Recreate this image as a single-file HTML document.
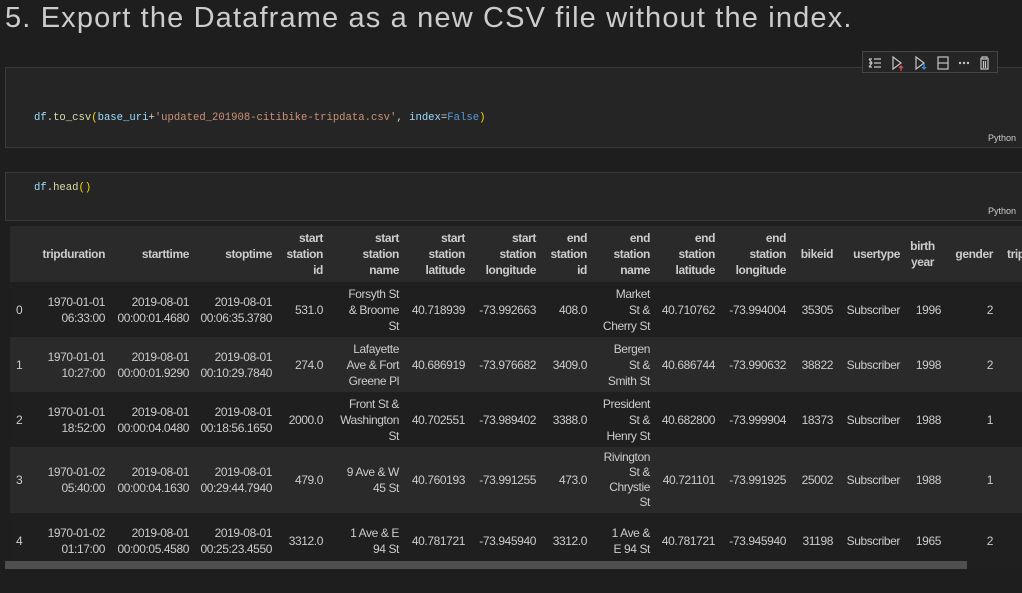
<!DOCTYPE html>
<html><head><meta charset="utf-8"><style>
*{margin:0;padding:0;box-sizing:border-box}
body{width:1022px;height:593px;background:#1e1e1e;color:#cccccc;font-family:"Liberation Sans",sans-serif;position:relative;overflow:hidden}
.title{position:absolute;left:5px;top:2px;font-size:29px;color:#cccccc;white-space:nowrap;letter-spacing:1.15px}
.cell{position:absolute;left:5px;width:1020px;background:#252526;border:1px solid #3a3a3a}
.code{position:absolute;left:28px;font-family:"Liberation Mono",monospace;font-size:10.6px;color:#d4d4d4;white-space:nowrap}
.py{position:absolute;right:8px;font-size:9px;color:#cccccc}
.v{color:#9cdcfe}.s{color:#ce9178}.b{color:#ffd700}.k{color:#569cd6}.f{color:#dcdcaa}
.tb{position:absolute;left:862px;top:51px;width:136px;height:22px;border:1px solid #454545;background:#252526;z-index:5}
table{position:absolute;left:10px;top:226px;width:1040px;border-collapse:collapse;table-layout:fixed;font-size:12px;letter-spacing:-0.4px}
td,th{text-align:right;padding:0 4px 0 0;white-space:nowrap;line-height:16px;overflow:hidden}
th{font-weight:bold;height:56px;background:#2a2a2a;color:#cccccc}
tr.o td{background:#1f1f1f}tr.e td{background:#2a2a2a}
td{height:55px;color:#cccccc}
td:first-child{text-align:left;padding-left:6px}
.sb{position:absolute;left:5px;top:561px;width:962px;height:8px;background:#4f4f4f}
</style></head><body>
<div class="title">5. Export the Dataframe as a new CSV file without the index.</div>
<div class="cell" style="top:67px;height:81px">
<div class="code" style="top:44px"><span class="v">df</span>.<span class="f">to_csv</span><span class="b">(</span><span class="v">base_uri</span>+<span class="s">'updated_201908-citibike-tripdata.csv'</span>, <span class="v">index</span>=<span class="k">False</span><span class="b">)</span></div>
<div class="py" style="top:65px">Python</div>
</div>
<div class="tb">
<svg width="136" height="22" viewBox="0 0 136 22" fill="none" stroke="#c5c5c5" stroke-width="1.2">
<path d="M6 7h3M6 11h3M6 15h3M11 7h7M11 11h7M11 15h7M6 7l3 4-3 4"/>
<path d="M30 5l8 6-8 6z"/><path d="M38 14v5M36 16l2-2 2 2" stroke="#f14c4c"/>
<path d="M53 5l8 6-8 6z"/><path d="M61 12v5M59 15l2 2 2-2" stroke="#3794ff"/>
<rect x="75" y="5" width="10" height="12"/><path d="M75 11h10"/>
<circle cx="97" cy="11" r=".6" fill="#c5c5c5"/><circle cx="101" cy="11" r=".6" fill="#c5c5c5"/><circle cx="105" cy="11" r=".6" fill="#c5c5c5"/>
<path d="M117 7h9M119 7V5h5v2M118 8v9h7V8M120.5 9v7M122.5 9v7"/>
</svg></div>
<div class="cell" style="top:172px;height:49px">
<div class="code" style="top:9px"><span class="v">df</span>.<span class="f">head</span><span class="b">()</span></div>
<div class="py" style="top:33px">Python</div>
</div>
<table>
<colgroup><col style="width:20px"><col style="width:79px"><col style="width:84px"><col style="width:83px"><col style="width:51px"><col style="width:76px"><col style="width:66px"><col style="width:71px"><col style="width:51px"><col style="width:63px"><col style="width:65px"><col style="width:71px"><col style="width:47px"><col style="width:67px"><col style="width:41px"><col style="width:52px"><col style="width:53px"></colgroup>
<tr><th></th><th>tripduration</th><th>starttime</th><th>stoptime</th><th>start<br>station<br>id</th><th>start<br>station<br>name</th><th>start<br>station<br>latitude</th><th>start<br>station<br>longitude</th><th>end<br>station<br>id</th><th>end<br>station<br>name</th><th>end<br>station<br>latitude</th><th>end<br>station<br>longitude</th><th>bikeid</th><th>usertype</th><th style="text-align:center">birth<br>year</th><th>gender</th><th style="text-align:left;padding-left:10px">trip</th></tr>
<tr class="o"><td>0</td><td>1970-01-01<br>06:33:00</td><td>2019-08-01<br>00:00:01.4680</td><td>2019-08-01<br>00:06:35.3780</td><td>531.0</td><td>Forsyth St<br>&amp; Broome<br>St</td><td>40.718939</td><td>-73.992663</td><td>408.0</td><td>Market<br>St &amp;<br>Cherry St</td><td>40.710762</td><td>-73.994004</td><td>35305</td><td>Subscriber</td><td>1996</td><td>2</td><td></td></tr>
<tr class="e"><td>1</td><td>1970-01-01<br>10:27:00</td><td>2019-08-01<br>00:00:01.9290</td><td>2019-08-01<br>00:10:29.7840</td><td>274.0</td><td>Lafayette<br>Ave &amp; Fort<br>Greene Pl</td><td>40.686919</td><td>-73.976682</td><td>3409.0</td><td>Bergen<br>St &amp;<br>Smith St</td><td>40.686744</td><td>-73.990632</td><td>38822</td><td>Subscriber</td><td>1998</td><td>2</td><td></td></tr>
<tr class="o"><td>2</td><td>1970-01-01<br>18:52:00</td><td>2019-08-01<br>00:00:04.0480</td><td>2019-08-01<br>00:18:56.1650</td><td>2000.0</td><td>Front St &amp;<br>Washington<br>St</td><td>40.702551</td><td>-73.989402</td><td>3388.0</td><td>President<br>St &amp;<br>Henry St</td><td>40.682800</td><td>-73.999904</td><td>18373</td><td>Subscriber</td><td>1988</td><td>1</td><td></td></tr>
<tr class="e"><td style="height:66px">3</td><td>1970-01-02<br>05:40:00</td><td>2019-08-01<br>00:00:04.1630</td><td>2019-08-01<br>00:29:44.7940</td><td>479.0</td><td>9 Ave &amp; W<br>45 St</td><td>40.760193</td><td>-73.991255</td><td>473.0</td><td style="line-height:15px">Rivington<br>St &amp;<br>Chrystie<br>St</td><td>40.721101</td><td>-73.991925</td><td>25002</td><td>Subscriber</td><td>1988</td><td>1</td><td></td></tr>
<tr class="o"><td style="height:38px">4</td><td>1970-01-02<br>01:17:00</td><td>2019-08-01<br>00:00:05.4580</td><td>2019-08-01<br>00:25:23.4550</td><td>3312.0</td><td>1 Ave &amp; E<br>94 St</td><td>40.781721</td><td>-73.945940</td><td>3312.0</td><td>1 Ave &amp;<br>E 94 St</td><td>40.781721</td><td>-73.945940</td><td>31198</td><td>Subscriber</td><td>1965</td><td>2</td><td></td></tr>
</table>
<div class="sb"></div>
</body></html>
